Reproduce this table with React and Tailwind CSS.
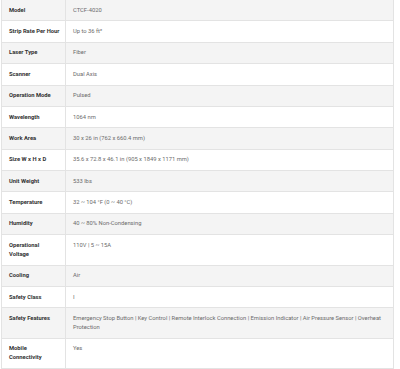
const specs = [
  ['Model', 'CTCF-4020'],
  ['Strip Rate Per Hour', 'Up to 36 ft²'],
  ['Laser Type', 'Fiber'],
  ['Scanner', 'Dual Axis'],
  ['Operation Mode', 'Pulsed'],
  ['Wavelength', '1064 nm'],
  ['Work Area', '30 x 26 in (762 x 660.4 mm)'],
  ['Size W x H x D', '35.6 x 72.8 x 46.1 in (905 x 1849 x 1171 mm)'],
  ['Unit Weight', '533 lbs'],
  ['Temperature', '32 ~ 104 °F (0 ~ 40 °C)'],
  ['Humidity', '40 ~ 80% Non-Condensing'],
  ['Operational Voltage', '110V | 5 ~ 15A'],
  ['Cooling', 'Air'],
  ['Safety Class', 'I'],
  ['Safety Features', 'Emergency Stop Button | Key Control | Remote Interlock Connection | Emission Indicator | Air Pressure Sensor | Overheat Protection'],
  ['Mobile Connectivity', 'Yes'],
];

export default function App() {
  return (
    <div className="w-[400px] h-[369px] overflow-hidden bg-white font-['Roboto',sans-serif]">
      <table className="ml-[1px] w-[393px] table-fixed border-collapse border-x border-[#e3e3e3] text-[5.8px] leading-[9px]">
        <colgroup>
          <col className="w-[64px]" />
          <col />
        </colgroup>
        <tbody>
          {specs.map(([label, value], i) => (
            <tr key={label} className={`border-b border-[#e3e3e3] ${i % 2 === 0 ? 'bg-[#f4f4f4]' : 'bg-white'}`}>
              <td className="border-r border-[#e3e3e3] pl-[7px] pr-[5px] py-[5.7px] align-top font-bold text-[#333333]">
                {label}
              </td>
              <td className="px-[7px] py-[5.7px] align-top text-[#6b6b6b]">{value}</td>
            </tr>
          ))}
        </tbody>
      </table>
    </div>
  );
}
